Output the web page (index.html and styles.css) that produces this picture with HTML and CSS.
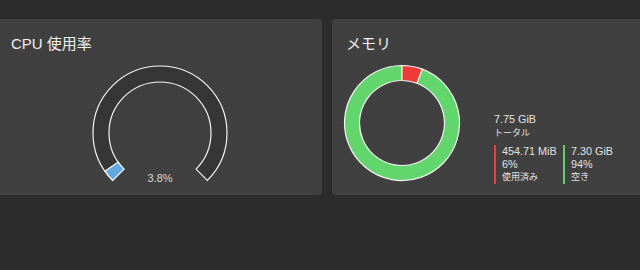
FILE: index.html
```html
<!DOCTYPE html>
<html lang="ja">
<head>
<meta charset="utf-8">
<title>システムモニター</title>
<link rel="stylesheet" href="styles.css">
</head>
<body>
<div class="board">
    <div class="card">
        <div class="title">CPU 使用率</div>
        <div class="cpu-body">
            <svg class="gauge" width="140" height="123" viewBox="0 0 140 123">
                <path class="track" d="M 22.62 117.38 A 67 67 0 1 1 117.38 117.38 L 106.06 106.06 A 51 51 0 1 0 33.94 106.06 Z"/>
                <path class="used-cpu" d="M 22.62 117.38 A 67 67 0 0 1 14.95 108.19 L 28.09 99.07 A 51 51 0 0 0 33.94 106.06 Z"/>
                <text class="gauge-label" x="70" y="118.7">3.8%</text>
            </svg>
        </div>
    </div>
    <div class="card">
        <div class="title">メモリ</div>
        <div class="mem-body">
            <svg class="donut" width="120" height="120" viewBox="0 0 120 120">
                <path class="free" d="M 80.23 6.17 A 57.5 57.5 0 1 1 60 2.5 L 60 17.5 A 42.5 42.5 0 1 0 74.95 20.22 Z"/>
                <path class="used" d="M 60 2.5 A 57.5 57.5 0 0 1 80.23 6.17 L 74.95 20.22 A 42.5 42.5 0 0 0 60 17.5 Z"/>
            </svg>
            <div class="info">
                <div class="value">7.75 GiB</div>
                <div class="label total">トータル</div>
                <div class="cols">
                    <div class="col col-used">
                        <div class="value">454.71 MiB</div>
                        <div class="value">6%</div>
                        <div class="label">使用済み</div>
                    </div>
                    <div class="col col-free">
                        <div class="value">7.30 GiB</div>
                        <div class="value">94%</div>
                        <div class="label">空き</div>
                    </div>
                </div>
            </div>
        </div>
    </div>
</div>
</body>
</html>
```

FILE: styles.css
```css
body
{
    margin: 0;
    background: #2c2c2c;
    overflow: hidden;
    font-family: "Liberation Sans", "Noto Sans CJK JP", sans-serif;
    color: #e2e2e2;
}
.board
{
    display: flex;
    gap: 10px;
    margin-left: -3px;
    padding-top: 19px;
}
.card
{
    flex: none;
    width: 325px;
    height: 176px;
    box-sizing: border-box;
    padding: 15px 14px 0 14px;
    background: #404040;
    border-radius: 4px;
}
.title
{
    font-size: 15px;
    line-height: 20px;
    height: 20px;
    color: #f0f0f0;
}
.cpu-body
{
    display: flex;
    justify-content: center;
    margin-top: 9px;
    padding-left: 1px;
}
.gauge
{
    display: block;
}
.track
{
    fill: #363636;
    stroke: #f4f4f4;
    stroke-width: 1.2;
}
.used-cpu
{
    fill: #63a8e0;
    stroke: #f4f4f4;
    stroke-width: 1.2;
}
.gauge-label
{
    font-family: "Liberation Sans", sans-serif;
    font-size: 11px;
    fill: #d8d8d8;
    text-anchor: middle;
}
.mem-body
{
    display: flex;
    align-items: flex-end;
    margin-top: 9px;
    margin-left: -4px;
}
.donut
{
    display: block;
    flex: none;
}
.free
{
    fill: #62d66c;
    stroke: #f4f4f4;
    stroke-width: 1.2;
}
.used
{
    fill: #ef3b35;
    stroke: #f4f4f4;
    stroke-width: 1.2;
}
.info
{
    margin-left: 32px;
    margin-bottom: -1px;
}
.value
{
    font-size: 10.8px;
    line-height: 13px;
}
.info > .value
{
    line-height: 14px;
}
.label
{
    font-size: 9px;
    line-height: 13px;
}
.total
{
    line-height: 14px;
}
.cols
{
    display: flex;
    margin-top: 5px;
}
.col
{
    padding-left: 6px;
    border-left: 2px solid;
}
.col-used
{
    width: 61px;
    border-color: #e8403a;
}
.col-free
{
    border-color: #5fd068;
}
```
